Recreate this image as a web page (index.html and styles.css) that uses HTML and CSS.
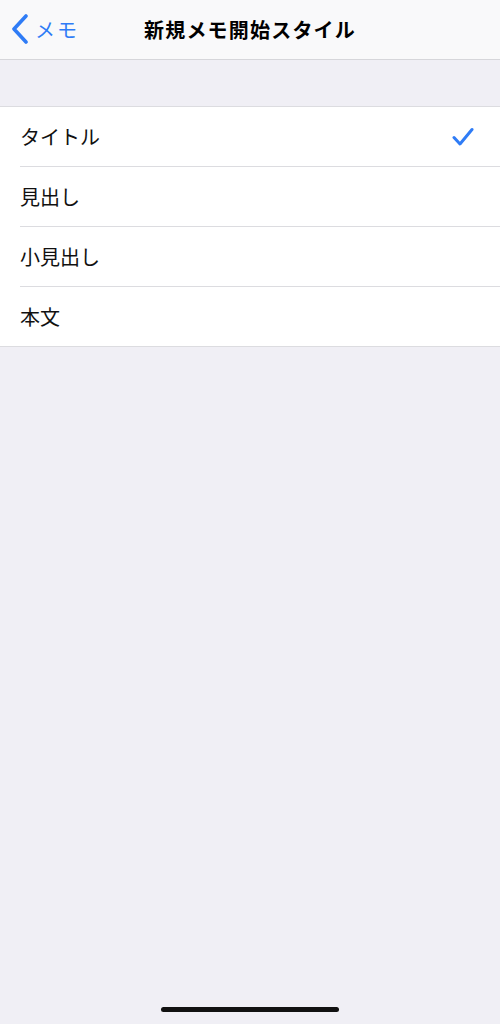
FILE: index.html
```html
<!DOCTYPE html>
<html lang="ja">
<head>
    <meta charset="UTF-8">
    <meta name="viewport" content="width=device-width, initial-scale=1.0">
    <title>新規メモ開始スタイル</title>
    <link rel="stylesheet" href="styles.css">
</head>
<body>
    <div class="navbar">
        <a class="back" href="#">
            <svg class="chevron" width="18" height="30" viewBox="0 0 18 30">
                <path d="M15 2 L3 15 L15 28" fill="none" stroke="#2f7cf6" stroke-width="3.6" stroke-linecap="round" stroke-linejoin="round"/>
            </svg>
            <span>メモ</span>
        </a>
        <div class="title">新規メモ開始スタイル</div>
    </div>

    <div class="spacer"></div>

    <ul class="list">
        <li class="row">
            <span>タイトル</span>
            <svg class="check" width="22" height="20" viewBox="0 0 22 20">
                <path d="M2 10.5 L8 17 L20 2.5" fill="none" stroke="#2f7cf6" stroke-width="3" stroke-linecap="round" stroke-linejoin="round"/>
            </svg>
        </li>
        <li class="row"><span>見出し</span></li>
        <li class="row"><span>小見出し</span></li>
        <li class="row"><span>本文</span></li>
    </ul>

    <div class="home-bar"></div>
</body>
</html>
```

FILE: styles.css
```css
body {
    font-family: "Noto Sans CJK JP", "Noto Sans", sans-serif;
    margin: 0;
    width: 500px;
    height: 1024px;
    background-color: #f0eff5;
    position: relative;
    overflow: hidden;
}
.navbar {
    height: 59px;
    background-color: #f9f9fa;
    border-bottom: 1px solid #d6d6da;
    display: flex;
    align-items: center;
    justify-content: center;
    position: relative;
}
.back {
    position: absolute;
    left: 11px;
    top: 14px;
    display: flex;
    align-items: center;
    gap: 6px;
    color: #2f7cf6;
    text-decoration: none;
    font-size: 20px;
    letter-spacing: 2px;
}
.chevron {
    display: block;
}
.title {
    font-size: 20px;
    font-weight: bold;
    color: #000;
    letter-spacing: 1.2px;
}
.spacer {
    height: 46px;
}
.list {
    list-style: none;
    margin: 0;
    padding: 0;
    background-color: #fff;
    border-top: 1px solid #dcdce0;
    border-bottom: 1px solid #dcdce0;
}
.row {
    height: 59px;
    margin-left: 20px;
    padding-right: 26px;
    display: flex;
    align-items: center;
    justify-content: space-between;
    font-size: 20px;
    color: #111;
    border-bottom: 1px solid #dcdce0;
}
.row:last-child {
    border-bottom: none;
}
.check {
    display: block;
}
.home-bar {
    position: absolute;
    left: 161px;
    top: 1007px;
    width: 178px;
    height: 5px;
    border-radius: 3px;
    background-color: #111;
}
```
